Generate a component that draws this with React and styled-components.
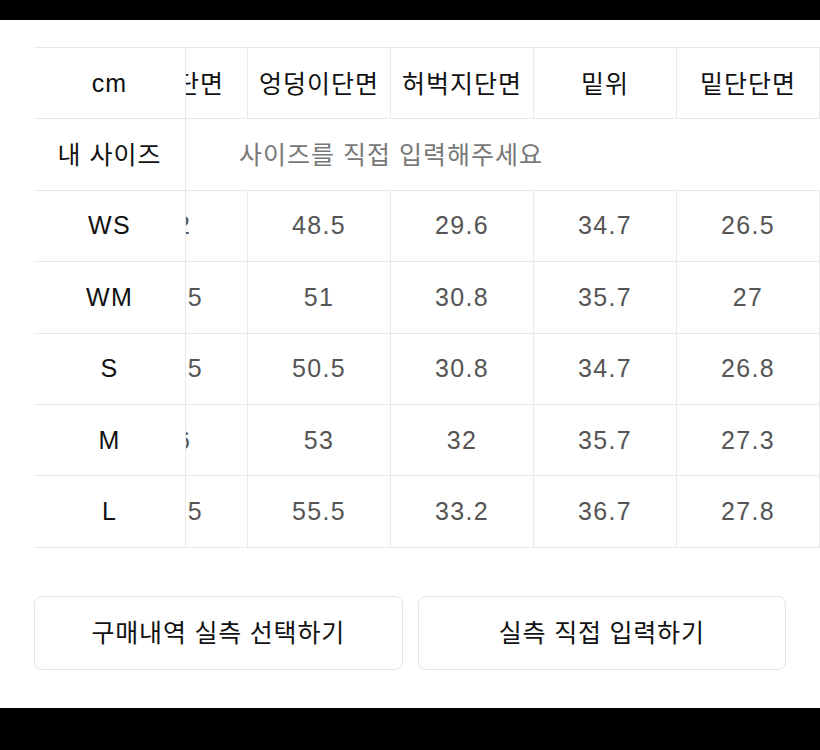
import React, { useLayoutEffect, useRef } from "react";
import styled, { createGlobalStyle } from "styled-components";

const GlobalStyle = createGlobalStyle`
    html, body {
        margin: 0;
        padding: 0;
        background: #000;
    }
    * {
        box-sizing: border-box;
    }
`;

const Screen = styled.div`
    width: 820px;
    height: 750px;
    display: flex;
    flex-direction: column;
    font-family: "Liberation Sans", "Noto Sans CJK KR", sans-serif;
    font-size: 25px;
    letter-spacing: 1px;
    overflow: hidden;
`;

const BlackBar = styled.div`
    height: ${(props) => props.height}px;
    flex-shrink: 0;
    background: #000;
`;

const Main = styled.div`
    flex: 1;
    background: #fff;
    padding: 27px 34px 0;
`;

const ScrollArea = styled.div`
    margin-right: -34px;
    overflow-x: auto;
    scrollbar-width: none;
    &::-webkit-scrollbar {
        display: none;
    }
`;

const Table = styled.table`
    table-layout: fixed;
    width: 1010px;
    border-collapse: separate;
    border-spacing: 0;
    border-top: 1px solid #ebe8e8;
`;

const Cell = styled.td`
    height: 71.4px;
    padding: 0 0 ${(props) => (props.hangul ? "3px" : "0")};
    text-align: center;
    vertical-align: middle;
    border-right: 1px solid #ebe8e8;
    border-bottom: 1px solid #ebe8e8;
    font-weight: 400;
    color: ${(props) => (props.head ? "#111" : "#555")};
    letter-spacing: ${(props) => (props.head ? "1px" : "1.3px")};
    white-space: nowrap;
`;

const StickyCell = styled(Cell)`
    position: sticky;
    left: 0;
    z-index: 1;
    background: #fff;
    color: #111;
`;

const Placeholder = styled(Cell)`
    color: #787878;
    letter-spacing: 1px;
    border-right: none;
`;

const ButtonRow = styled.div`
    display: flex;
    gap: 15px;
    margin-top: 48px;
`;

const ActionButton = styled.button`
    flex: 1;
    height: 74px;
    padding: 0 0 3px;
    border: 1px solid #e6e3e3;
    border-radius: 8px;
    background: #fff;
    color: #111;
    font-family: inherit;
    font-size: 25px;
    letter-spacing: 0.8px;
    cursor: pointer;
`;

const columns = ["총장", "허리단면", "엉덩이단면", "허벅지단면", "밑위", "밑단단면"];

const sizes = [
    { name: "WS", values: ["100", "32", "48.5", "29.6", "34.7", "26.5"] },
    { name: "WM", values: ["101", "33.5", "51", "30.8", "35.7", "27"] },
    { name: "S", values: ["101", "34.5", "50.5", "30.8", "34.7", "26.8"] },
    { name: "M", values: ["102", "36", "53", "32", "35.7", "27.3"] },
    { name: "L", values: ["103", "37.5", "55.5", "33.2", "36.7", "27.8"] },
];

function App() {
    const scrollRef = useRef(null);

    useLayoutEffect(() => {
        const el = scrollRef.current;
        el.scrollLeft = el.scrollWidth;
    }, []);

    return (
        <Screen>
            <GlobalStyle />
            <BlackBar height={20} />
            <Main>
                <ScrollArea ref={scrollRef}>
                    <Table>
                        <colgroup>
                            <col style={{ width: 152 }} />
                            {columns.map((c) => (
                                <col key={c} style={{ width: 143 }} />
                            ))}
                        </colgroup>
                        <tbody>
                            <tr>
                                <StickyCell as="th" head>cm</StickyCell>
                                {columns.map((c) => (
                                    <Cell as="th" head hangul key={c}>
                                        {c}
                                    </Cell>
                                ))}
                            </tr>
                            <tr>
                                <StickyCell head hangul>내 사이즈</StickyCell>
                                <Placeholder hangul colSpan={columns.length}>
                                    사이즈를 직접 입력해주세요
                                </Placeholder>
                            </tr>
                            {sizes.map((s) => (
                                <tr key={s.name}>
                                    <StickyCell>{s.name}</StickyCell>
                                    {s.values.map((v, i) => (
                                        <Cell key={i}>{v}</Cell>
                                    ))}
                                </tr>
                            ))}
                        </tbody>
                    </Table>
                </ScrollArea>
                <ButtonRow>
                    <ActionButton>구매내역 실측 선택하기</ActionButton>
                    <ActionButton>실측 직접 입력하기</ActionButton>
                </ButtonRow>
            </Main>
            <BlackBar height={42} />
        </Screen>
    );
}

export default App;
